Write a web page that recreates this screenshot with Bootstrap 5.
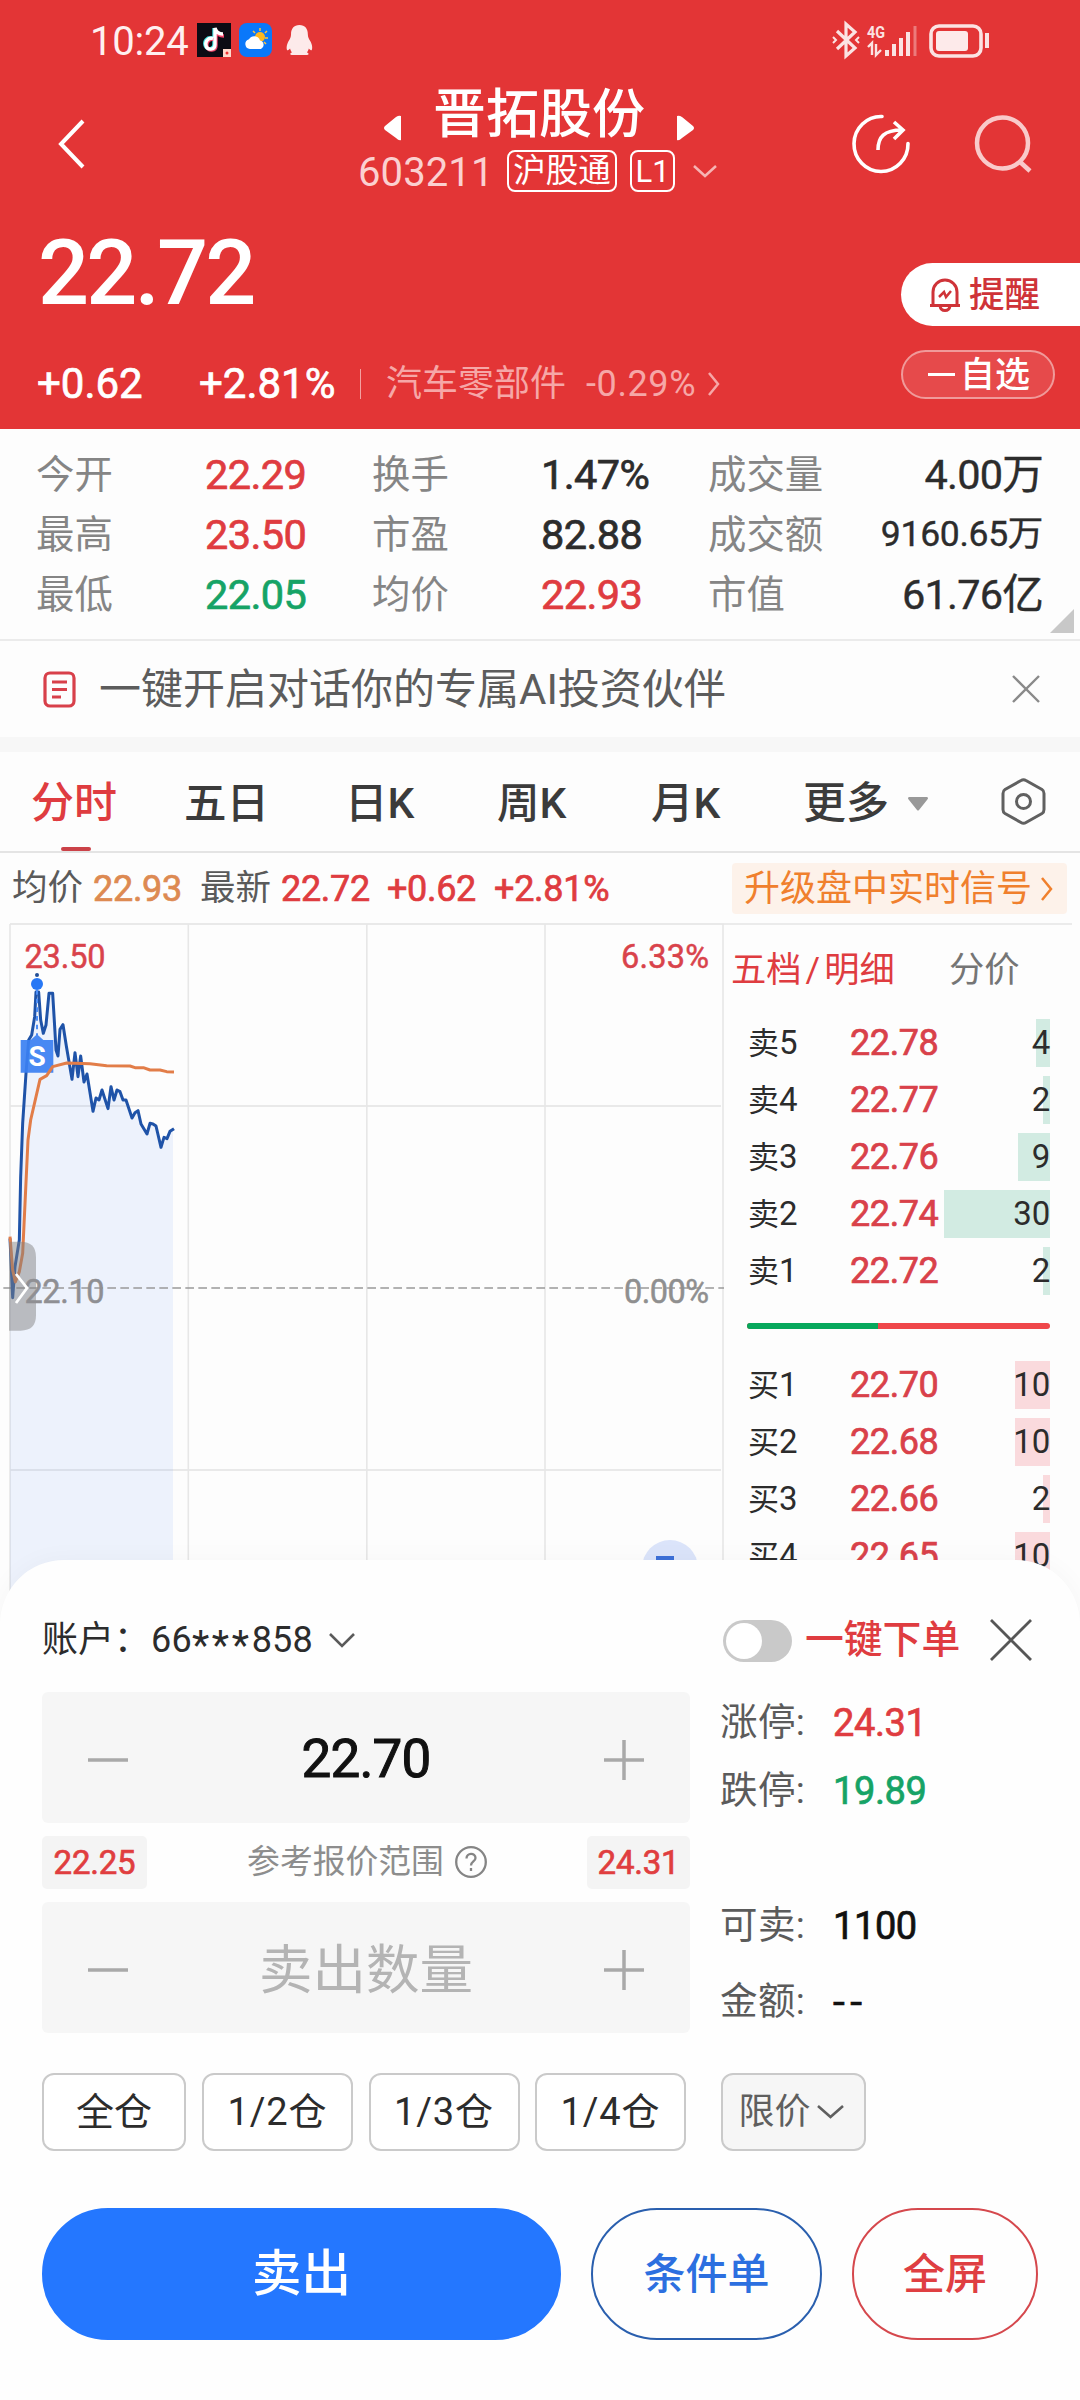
<!DOCTYPE html>
<html lang="zh-CN">
<head>
<meta charset="utf-8">
<meta name="viewport" content="width=device-width, initial-scale=1">
<title>晋拓股份 603211</title>
<link href="https://cdn.jsdelivr.net/npm/bootstrap@5.3.0/dist/css/bootstrap.min.css" rel="stylesheet">
<style>
  :root { --red:#e33536; --up:#df3c40; --down:#16a366; --ink:#2c2c2c; --mut:#858585; --blue:#2477ff; }
  body { width:1080px; height:2400px; overflow:hidden; background:#fdfdfd; color:var(--ink);
    font-family:Roboto,"Noto Sans CJK SC",sans-serif; font-size:36px; line-height:1; }
  svg { display:block; flex:none; overflow:visible; }
  .c-up { color:var(--up); } .c-down { color:var(--down); } .c-mut { color:var(--mut); }
  .med { font-weight:500; }
  span { white-space:nowrap; }
  .fig, .stats .val, .avgline .num, .lv .px, .kv .v, .chip { font-weight:400; -webkit-text-stroke:.7px currentColor; }

  .hero { background:var(--red); height:429px; color:#fff; }
  .statusbar { height:80px; padding:0 90px 0 90px; }
  .clock { font-size:40px; width:107px; color:#fff0f0; letter-spacing:-.2px; padding-top:4px; }
  .titlebar { height:130px; padding:0 48px 0 58px; }
  .title-mid { width:362px; margin-left:274px; }
  .stock-name { font-size:53px; height:68px; width:212px; line-height:70px; margin:0 32px; }
  .stock-code { font-size:40px; color:#fbd0d0; width:149px; letter-spacing:.1px; padding-top:3px; }
  .tagbox { border:2px solid #fff; border-radius:8px; height:42px; line-height:39px; font-size:32.5px; text-align:center; }
  .tag-hgt { width:110px; } .tag-l1 { width:45px; font-size:31px; }
  .last-price { font-size:90px; letter-spacing:-2.8px; padding-left:38px; height:120px; line-height:127px; font-weight:500; }
  .quote-left { width:901px; }
  .change-row { height:60px; padding-left:37px; font-size:42px; margin-top:24px; }
  .chg-abs { width:162px; } .chg-pct { width:161px; }
  .vbar { width:1px; height:30px; background:#f3a1a1; }
  .sector { color:#f6a7a7; font-size:36px; margin-left:25px; }
  .sector-pct { color:#f6a7a7; font-size:36px; margin:0 12px 0 20px; letter-spacing:.6px; }
  .alert-pill { height:63px; background:#fff; color:#cf3338; border-radius:32px 0 0 32px; padding-left:28px; margin-top:53px; }
  .alert-pill span { margin-left:8px; font-size:35.5px; padding-top:2px; }
  .fav-pill { height:49px; width:154px; border:2px solid #f09a9a; background:#e64a4b; border-radius:25px; margin-top:24px; padding-left:25px; font-size:35px; }
  .fav-pill span { padding-top:2px; }
  .fav-dash { width:27px; height:3px; background:#fff; margin-right:5px; }

  .stats { height:212px; padding:16px 37px 0 36px; border-bottom:2px solid #ebebeb; position:relative;
    display:grid; grid-template-columns:169px 167px 169px 167px 150px 1fr; grid-template-rows:repeat(3,60px); align-items:center; }
  .stats .lab { color:var(--mut); font-size:38.4px; }
  .stats .val { font-size:41.5px; letter-spacing:-.6px; }
  .stats .end { text-align:right; -webkit-text-stroke:.4px currentColor; letter-spacing:-.8px; }
  .stats .narrow { font-size:35.5px; letter-spacing:-.3px; }
  .corner { position:absolute; right:6px; bottom:6px; }

  .promo { height:96px; padding:0 41px 0 43px; font-size:42px; color:#5c5c5c; }
  .promo span { margin-left:23px; width:914px; padding-top:2px; }
  .band { height:15px; background:#f7f7f7; }
  .tabs { height:101px; border-bottom:2px solid #e4e4e4; padding:0 34px 0 31px; font-size:43px; color:#3b3b3b; font-weight:500; }
  .tabs a { color:inherit; text-decoration:none; height:99px; line-height:103px; position:relative; }
  .tabs .on { color:var(--up); }
  .tabs .on::after { content:""; position:absolute; left:30px; bottom:0; width:30px; height:4px; background:#cb4248; border-radius:2px; }
  .t1 { width:153px; } .t2 { width:161px; } .t3 { width:152px; } .t4 { width:154px; } .t5 { width:152px; } .t6 { width:105px; }
  .tabs .t2, .tabs .t3, .tabs .t4, .tabs .t5 { -webkit-text-stroke:0; font-size:42.5px; }
  .avgline { height:61px; padding:10px 13px 0 12px; color:#5a5a5a; font-size:35.5px; }
  .avgline .num { font-size:36px; letter-spacing:-.3px; }
  .avgline .avg { color:#dd8a52; margin:0 18px 0 10px; }
  .upgrade { width:335px; height:51px; background:#fdf2ea; color:#f0802d; font-size:36px; border-radius:4px; padding:0 14px 0 12px; margin-left:auto; }

  .market { height:704px; }
  .book { width:356px; }
  .book-tabs { border-top:2px solid #ebebeb; margin:9px 8px 0 0; height:91px; padding:0 0 0 7px; font-size:35.3px; line-height:91px; }
  .lv { height:57px; padding:0 30px 0 24px; }
  .lv .side { width:102px; font-size:31px; } .lv .side b { font-weight:400; font-size:33px; }
  .lv .px { width:90px; font-size:36px; color:#d9414a; letter-spacing:-.4px; padding-top:1px; }
  .lv .qty { flex:1; text-align:right; font-size:33px; height:57px; line-height:58px; padding-right:0; letter-spacing:-.2px;
    background:linear-gradient(var(--tone),var(--tone)) right center / var(--w) 48px no-repeat; }
  .asks { --tone:#d2ebe2; } .bids { --tone:#fadadd; }
  .bidask { height:6px; margin:24px 30px 27px 23px; border-radius:3px; background:#ef474a; overflow:hidden; }
  .bidask div { height:6px; background:#07a85c; }

  .sheet { position:relative; margin-top:-58px; height:840px; background:#fefefe; border-radius:64px 64px 0 0; padding:43px 42px 0 42px; box-shadow:0 0 26px rgba(0,0,0,.035); }
  .acct { height:74px; }
  .acct-name { font-size:36px; width:109px; } .acct-no { font-size:36px; width:178px; letter-spacing:.2px; }
  .acct-no i { font-style:normal; font-size:40px; letter-spacing:2.7px; position:relative; top:7px; line-height:0; }
  .toggle { width:69px; height:42px; border-radius:21px; background:#c9c9c9; padding:3px; margin:2px 0 0 368px; }
  .toggle div { width:36px; height:36px; border-radius:50%; background:#fff; }
  .oneclick { font-size:38.8px; margin-left:13px; width:186px; }
  .form-left { width:648px; margin-top:15px; }
  .stepper { height:131px; background:#f6f6f6; border-radius:6px; padding:0 46px 0 46px; }
  .stepper .amount { font-size:53px; color:#111; letter-spacing:-.8px; padding-top:3px; -webkit-text-stroke:1px #111; }
  .stepper .hint { font-size:53.5px; color:#b4b4b4; padding-top:7px; }
  .refrow { height:53px; margin:13px 0; color:#8d8d8d; font-size:32.8px; }
  .chip { height:53px; line-height:54px; background:#f4f4f4; border-radius:5px; font-size:33px; color:#e03e3f; text-align:center; letter-spacing:-.2px; }
  .chip-l { width:105px; } .chip-r { width:103px; }
  .form-right { margin-left:30px; font-size:37.5px; color:#5b5b5b; padding-top:12px; }
  .kv { height:68px; } .kv .k { width:113px; letter-spacing:.4px; } .kv .v { font-size:38px; letter-spacing:-.4px; }
  .kv .dark { color:#111; } .kv .dashes { letter-spacing:5px; transform:scaleX(1.12); transform-origin:left; }
  .kv-gap { margin-top:67px; } .kv-last { margin-top:8px; }
  .lots { margin-top:37px; height:78px; }
  .lot { height:78px; border:2px solid #cacaca; border-radius:12px; background:#fff; font-size:38px; letter-spacing:.9px; padding:0; color:var(--ink); }
  .lot:first-child { width:144px; letter-spacing:0; margin-right:16px; } .lot-n { width:151px; margin-right:15.5px; }
  .lot-type { width:145px; background:#f6f6f6; color:#5f5f5f; font-size:36px; letter-spacing:0; margin-left:19px; padding-right:4px; }
  .actions { margin-top:57px; }
  .act { height:132px; border-radius:66px; padding:0; border:2px solid; font-weight:500; font-size:42px; }
  .act-sell { width:519px; background:var(--blue); border-color:var(--blue); color:#fff; font-size:49.5px; }
  .act-cond { width:231px; margin:0 30px; color:#2c6fe0; border-color:#2a5fae; }
  .act-full { width:186px; color:#df3f42; border-color:#d5484d; }
</style>
<script src="https://cdn.jsdelivr.net/npm/bootstrap@5.3.0/dist/js/bootstrap.bundle.min.js"></script>
</head>
<body>

<header class="hero">
  <div class="statusbar d-flex align-items-center">
    <span class="clock">10:24</span>
    <svg width="34" height="34" viewBox="0 0 34 34"><rect width="34" height="34" fill="#0c0b14"/>
      <g fill="none" stroke-width="3.4"><path d="M15 15c-5-1-8 3-7 7 1 5 9 5 9-1V5" stroke="#3fe0e0"/><path d="M17 16.500c-5-1-8 3-7 7 1 5 9 5 9-1V7c1 4 4 6 8 6" stroke="#f0446a"/><path d="M16 15.500c-5-1-8 3-7 7 1 5 9 5 9-1V5c1 4 4 6 8 6" stroke="#fff"/></g>
      <rect x="26" y="26" width="8" height="8" fill="#ffd9cc"/><circle cx="30" cy="30" r="1.500" fill="#e33"/></svg>
    <svg class="ms-2" width="33" height="34" viewBox="0 0 33 34"><rect width="33" height="34" rx="8" fill="#0a78fa"/>
      <g stroke="#ffc53d" stroke-width="1.500"><path d="M21 5v3M14 8l2 2M28 8l-2 2M29 15h-3M27 21l-2-2"/></g>
      <circle cx="21" cy="14" r="5" fill="#ffb81f"/><path d="M11 26a5 5 0 0 1-1-9.800 6 6 0 0 1 11 1.300 4.500 4.500 0 0 1 1 8.500z" fill="#fff"/></svg>
    <svg class="ms-2 ps-1" width="33" height="34" viewBox="-2 0 31 34"><path d="M14.500 1c6 0 9 4 9 10 0 3 1 4 3 8 2 4 2 8 1 9-1 0-2-1-3-2 0 1-1 3-2 4 2 1 3 3-1 3h-14c-4 0-3-2-1-3-1-1-2-3-2-4-1 1-2 2-3 2-1-1-1-5 1-9 2-4 3-5 3-8 0-6 3-10 9-10z" fill="#fdeaea"/></svg>
    <svg class="ms-auto" width="157" height="36" viewBox="833 21 157 36" fill="none" stroke="#fbe3e3">
      <path d="M837 30l18 17-9 8V23l9 8-18 17" stroke-width="3.200"/><path d="M833 36l3 3-3 3M859 36l-3 3 3 3" stroke-width="2"/>
      <text x="867" y="37" font-size="17" font-weight="700" fill="#fbe3e3" stroke="none" textLength="18" lengthAdjust="spacingAndGlyphs">4G</text>
      <path d="M868 46l4-4v12M876 43v11l5-5" stroke-width="2.400"/>
      <path d="M887 49v6M894 43v12M901 37v18M908 31v24" stroke-width="4"/><path d="M915 25v30" stroke-width="3" opacity=".4"/>
      <rect x="931" y="25" width="50" height="30" rx="8" stroke-width="3.600"/><rect x="936" y="30" width="32" height="20" rx="3" fill="#fdeaea" stroke="none"/><path d="M987 32v15" stroke-width="4"/></svg>
  </div>

  <div class="titlebar d-flex">
    <svg style="margin-top:40px" width="26" height="48" viewBox="0 0 26 48" fill="none" stroke="#fff" stroke-width="4"><path d="M25 1L3 24l22 23"/></svg>
    <div class="title-mid">
      <div class="d-flex align-items-center justify-content-center">
        <svg style="margin-top:27px" width="18" height="26" viewBox="0 0 18 26"><path d="M18 1v24q-2 1-5-2L2 15q-2-2 0-4L13 2q3-2 5-1z" fill="#fff"/></svg>
        <span class="stock-name med text-center">晋拓股份</span>
        <svg style="margin-top:27px" width="18" height="26" viewBox="0 0 18 26"><path d="M0 1v24q2 1 5-2L16 15q2-2 0-4L5 2Q2 0 0 1z" fill="#fff"/></svg>
      </div>
      <div class="d-flex align-items-center" style="height:46px">
        <span class="stock-code">603211</span>
        <span class="tagbox tag-hgt">沪股通</span>
        <span class="tagbox tag-l1" style="margin:0 18px 0 13px">L1</span>
        <svg width="24" height="12" viewBox="0 0 24 12" fill="none" stroke="#f6b4b4" stroke-width="2.500"><path d="M1 1l11 10L23 1"/></svg>
      </div>
    </div>
    <svg style="margin:34px 0 0 130px" width="60" height="60" viewBox="851 114 60 60" fill="none" stroke="#fff" stroke-width="3.600"><path d="M883 116.500a27 27.500 0 1 0 26 27" stroke-linecap="round"/><path d="M879 150c0-13 6-20 24-20M895 122l9 8-9 9"/></svg>
    <svg class="ms-auto" style="margin-top:35px" width="56" height="58" viewBox="976 115 56 58" fill="none" stroke="#f9caca" stroke-width="4.500"><circle cx="1002.500" cy="143" r="25.500"/><path d="M1019 161l11 10"/></svg>
  </div>

  <div class="d-flex">
    <div class="quote-left">
      <div class="last-price">22.72</div>
      <div class="change-row d-flex align-items-center">
        <span class="chg-abs fig">+0.62</span><span class="chg-pct fig">+2.81%</span>
        <div class="vbar"></div>
        <span class="sector">汽车零部件</span><span class="sector-pct">-0.29%</span>
        <svg width="12" height="24" viewBox="0 0 12 24" fill="none" stroke="#f6a7a7" stroke-width="2.500"><path d="M1 1l9 11L1 23"/></svg>
      </div>
    </div>
    <div class="flex-fill">
      <div class="alert-pill d-flex align-items-center med">
        <svg width="32" height="34" viewBox="0 0 32 34" fill="none" stroke="#cf3338" stroke-width="3"><path d="M4 27V14a12 12 0 0 1 24 0v13M1 27.500h30M11 28c1 6 9 6 10 0"/><path d="M10 19l5-5 2 5 5-6" stroke-width="2.500"/></svg>
        <span>提醒</span>
      </div>
      <div class="fav-pill d-flex align-items-center med"><div class="fav-dash"></div><span>自选</span></div>
    </div>
  </div>
</header>

<section class="stats">
  <span class="lab">今开</span><span class="val c-up">22.29</span><span class="lab">换手</span><span class="val">1.47%</span><span class="lab">成交量</span><span class="val end">4.00万</span>
  <span class="lab">最高</span><span class="val c-up">23.50</span><span class="lab">市盈</span><span class="val">82.88</span><span class="lab">成交额</span><span class="val end narrow">9160.65万</span>
  <span class="lab">最低</span><span class="val c-down">22.05</span><span class="lab">均价</span><span class="val c-up">22.93</span><span class="lab">市值</span><span class="val end">61.76亿</span>
  <svg class="corner" width="24" height="24"><path d="M24 0v24H0z" fill="#c8c8c8"/></svg>
</section>

<section class="promo d-flex align-items-center">
  <svg width="33" height="37" viewBox="0 0 33 37" fill="none" stroke="#d8404a" stroke-width="3.200"><rect x="2" y="2" width="29" height="33" rx="5"/><path d="M9 11h15M9 18.500h15M9 26h9" stroke-width="2.800"/></svg>
  <span>一键开启对话你的专属AI投资伙伴</span>
  <svg width="26" height="26" viewBox="0 0 26 26" stroke="#8a8a8a" stroke-width="2.400"><path d="M0 0l26 26M26 0L0 26"/></svg>
</section>
<div class="band"></div>

<nav class="tabs d-flex align-items-center">
  <a class="t1 on" href="#">分时</a><a class="t2" href="#">五日</a><a class="t3" href="#">日K</a><a class="t4" href="#">周K</a><a class="t5" href="#">月K</a><a class="t6" href="#">更多</a>
  <svg class="mt-1" width="20" height="14" viewBox="0 0 20 14"><path d="M1 0h18q2 1 0 3l-8 10q-1 1-2 0L1 3Q-1 1 1 0z" fill="#999"/></svg>
  <svg class="ms-auto" width="45" height="47" viewBox="0 0 45 47" fill="none" stroke="#606060" stroke-width="3"><path d="M20 2.500q2.500-1.500 5 0l16 9q2 1.200 2 4v16q0 2.800-2 4l-16 9q-2.500 1.500-5 0l-16-9q-2-1.200-2-4v-16q0-2.800 2-4z"/><circle cx="22.500" cy="23.500" r="7"/></svg>
</nav>

<div class="avgline d-flex align-items-center">
  <span>均价</span><span class="num avg">22.93</span><span>最新</span>
  <span class="num c-up" style="margin-left:10px">22.72</span><span class="num c-up" style="margin-left:17px">+0.62</span><span class="num c-up" style="margin-left:18px">+2.81%</span>
  <div class="upgrade d-flex align-items-center justify-content-between"><span>升级盘中实时信号</span>
    <svg width="12" height="24" viewBox="0 0 12 24" fill="none" stroke="#f0802d" stroke-width="2.500"><path d="M1 1l9 11L1 23"/></svg></div>
</div>

<section class="market d-flex">
  <svg width="724" height="704" viewBox="0 914 724 704" font-size="32.500">
    <path d="M10 924h714M10 1106h711M10 1470h711" stroke="#e9e9e9" stroke-width="2.200" fill="none"/>
    <path d="M10 924v694M188.300 924v694M366.800 924v694M545 924v694M723 924v694" stroke="#e7e7e7" stroke-width="1.600" fill="none"/>
    <g transform="translate(0 910) scale(.33333)" fill="none" stroke-linejoin="round">
      <path d="M30 1000L38 1160 45 1070 58 990 62 800 68 640 78 490 86 390 95 375 104 320 108 246 116 246 122 330 130 370 138 345 147 250 158 250 168 420 174 438 180 358 189 344 199 408 216 508 225 428 234 500 242 438 252 516 261 492 279 604 288 564 297 570 306 540 324 596 333 530 342 570 351 540 378 570 396 624 414 602 423 642 441 672 450 640 468 648 483 712 501 686 519 656V2124H30z" fill="#4e86f0" fill-opacity=".09"/>
      <path d="M10 1134H2172" stroke="#999" stroke-width="5" stroke-dasharray="26 13"/>
      <path d="M30 985L38 1163 45 1070 58 990 62 800 68 640 78 490 86 390 95 375 104 320 108 246 116 246 122 330 130 370 138 345 147 250 158 250 164 350 168 420 174 438 180 358 189 344 199 408 216 508 225 428 234 500 242 438 252 516 261 492 279 604 288 564 297 570 306 540 324 596 333 530 342 570 351 540 360 545 369 570 378 570 396 624 405 608 414 602 423 642 441 672 450 640 459 642 468 648 483 712 492 682 501 686 510 664 522 656" stroke="#1f53a8" stroke-width="9"/>
      <path d="M111 240V375" stroke="#4d8ef5" stroke-width="6" stroke-dasharray="14 12"/>
      <circle cx="111" cy="195" r="6" fill="#234f96"/><circle cx="111" cy="222" r="18" fill="#2878f5"/>
      <path d="M62 390H92L111 373 130 390H160V488H62z" fill="#3b80f2" fill-opacity=".92"/>
      <path d="M30 980L38 1080 46 1116 58 1085 68 1030 76 860 84 690 92 630 120 508 140 497 158 470 200 459 270 461 320 467 390 468 405 473 430 473 450 480 480 480 500 485 522 486" stroke="#e27d48" stroke-width="9"/>
      <path d="M27 995H62Q108 995 108 1041V1216Q108 1262 62 1262H27z" fill="#808080" fill-opacity=".48"/>
    </g>
    <text x="37" y="1065.500" font-size="28" font-weight="700" fill="#fff" text-anchor="middle">S</text>
    <g stroke-width=".5"><text x="24.500" y="968" fill="#d9434b" stroke="#d9434b" textLength="81">23.50</text>
    <text x="709" y="968" fill="#d9434b" stroke="#d9434b" text-anchor="end" textLength="88">6.33%</text>
    <text x="24.500" y="1303" fill="#8f8f93" stroke="#8f8f93" textLength="80">22.10</text>
    <text x="709" y="1303" fill="#8f8f8f" stroke="#8f8f8f" text-anchor="end" textLength="85">0.00%</text></g>
    <path d="M16 1274l11 14-11 15" stroke="#fff" stroke-width="2.800" fill="none"/>
    <circle cx="670" cy="1568" r="28" fill="#dbe4fa"/><path d="M656 1558h18" stroke="#3c70d8" stroke-width="4" fill="none"/>
  </svg>
  <div class="book">
    <div class="book-tabs d-flex"><span class="c-up" style="width:218px">五档<span class="px-1">/</span>明细</span><span style="color:#757575">分价</span></div>
    <div class="asks">
      <div class="lv d-flex align-items-center"><span class="side">卖<b>5</b></span><span class="px">22.78</span><span class="qty" style="--w:14px">4</span></div>
      <div class="lv d-flex align-items-center"><span class="side">卖<b>4</b></span><span class="px">22.77</span><span class="qty" style="--w:7px">2</span></div>
      <div class="lv d-flex align-items-center"><span class="side">卖<b>3</b></span><span class="px">22.76</span><span class="qty" style="--w:32px">9</span></div>
      <div class="lv d-flex align-items-center"><span class="side">卖<b>2</b></span><span class="px">22.74</span><span class="qty" style="--w:106px">30</span></div>
      <div class="lv d-flex align-items-center"><span class="side">卖<b>1</b></span><span class="px">22.72</span><span class="qty" style="--w:7px">2</span></div>
    </div>
    <div class="bidask"><div style="width:43.300%"></div></div>
    <div class="bids">
      <div class="lv d-flex align-items-center"><span class="side">买<b>1</b></span><span class="px">22.70</span><span class="qty" style="--w:35px">10</span></div>
      <div class="lv d-flex align-items-center"><span class="side">买<b>2</b></span><span class="px">22.68</span><span class="qty" style="--w:35px">10</span></div>
      <div class="lv d-flex align-items-center"><span class="side">买<b>3</b></span><span class="px">22.66</span><span class="qty" style="--w:7px">2</span></div>
      <div class="lv d-flex align-items-center"><span class="side">买<b>4</b></span><span class="px">22.65</span><span class="qty" style="--w:35px">10</span></div>
    </div>
  </div>
</section>

<section class="sheet">
  <div class="acct d-flex align-items-center">
    <span class="acct-name">账户：</span><span class="acct-no">66<i>***</i>858</span>
    <svg width="26" height="14" viewBox="0 0 26 14" fill="none" stroke="#5a5a5a" stroke-width="2.600"><path d="M1 1l12 12L25 1"/></svg>
    <div class="toggle"><div></div></div>
    <span class="oneclick med c-up">一键下单</span>
    <svg width="40" height="40" viewBox="0 0 40 40" stroke="#565656" stroke-width="2.800"><path d="M0 0l40 40M40 0L0 40"/></svg>
  </div>

  <div class="d-flex">
    <div class="form-left">
      <div class="stepper d-flex align-items-center justify-content-between">
        <svg width="40" height="40" stroke="#a9a9a9" stroke-width="3.500"><path d="M0 22h40"/></svg>
        <span class="amount">22.70</span>
        <svg width="40" height="40" stroke="#a9a9a9" stroke-width="3.500"><path d="M0 22h40M20 2v40"/></svg>
      </div>
      <div class="refrow d-flex align-items-center justify-content-between">
        <span class="chip chip-l">22.25</span>
        <span class="d-flex align-items-center">参考报价范围
          <svg style="margin-left:11px" width="32" height="32" viewBox="0 0 32 32" fill="none" stroke="#858585" stroke-width="2.300"><circle cx="16" cy="16" r="14.800"/><path d="M11.500 12.500c0-6 9-6 9-.5 0 3.500-4.500 3.500-4.500 7.500M16 22v3"/></svg></span>
        <span class="chip chip-r">24.31</span>
      </div>
      <div class="stepper d-flex align-items-center justify-content-between">
        <svg width="40" height="40" stroke="#a9a9a9" stroke-width="3.500"><path d="M0 22h40"/></svg>
        <span class="hint">卖出数量</span>
        <svg width="40" height="40" stroke="#a9a9a9" stroke-width="3.500"><path d="M0 22h40M20 2v40"/></svg>
      </div>
    </div>
    <div class="form-right">
      <div class="kv d-flex align-items-center"><span class="k">涨停:</span><span class="v c-up">24.31</span></div>
      <div class="kv d-flex align-items-center"><span class="k">跌停:</span><span class="v c-down">19.89</span></div>
      <div class="kv kv-gap d-flex align-items-center"><span class="k">可卖:</span><span class="v dark">1100</span></div>
      <div class="kv kv-last d-flex align-items-center"><span class="k">金额:</span><span class="v dark dashes">--</span></div>
    </div>
  </div>

  <div class="lots d-flex">
    <button class="btn lot">全仓</button><button class="btn lot lot-n">1/2仓</button><button class="btn lot lot-n">1/3仓</button><button class="btn lot lot-n">1/4仓</button>
    <button class="btn lot lot-type d-flex align-items-center justify-content-center">限价
      <svg style="margin-left:6px" width="27" height="14" viewBox="0 0 27 14" fill="none" stroke="#5f5f5f" stroke-width="2.600"><path d="M1 1l12.500 11L26 1"/></svg></button>
  </div>

  <div class="actions d-flex">
    <button class="btn act act-sell">卖出</button><button class="btn act act-cond">条件单</button><button class="btn act act-full">全屏</button>
  </div>
</section>
</body>
</html>
